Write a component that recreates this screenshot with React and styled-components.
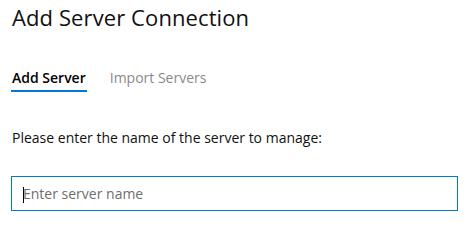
import React from "react";
import styled, { createGlobalStyle } from "styled-components";

const Global = createGlobalStyle`
  html, body { margin: 0; padding: 0; background: #fff; }
  body { font-family: "Segoe UI", "Open Sans", sans-serif; color: #000; }
`;

const Page = styled.div`
  display: flex;
  flex-direction: column;
  padding: 0 12px 0 11px;
`;

const Title = styled.h1`
  margin: 0;
  padding-left: 1px;
  font-size: 22px;
  font-weight: 400;
  line-height: 34px;
  letter-spacing: 0.1px;
  color: #111;
`;

const Tabs = styled.div`
  display: flex;
  gap: 22px;
  margin-top: 34px;
`;

const Tab = styled.div`
  font-size: 14px;
  line-height: 20px;
  padding: 0 1px 2px;
  font-weight: ${(p) => (p.$active ? 600 : 400)};
  color: ${(p) => (p.$active ? "#000" : "#8a8a8a")};
  border-bottom: 2px solid ${(p) => (p.$active ? "#0078d4" : "transparent")};
`;

const Label = styled.div`
  margin-top: 36px;
  padding-left: 1px;
  font-size: 14px;
  line-height: 20px;
  color: #111;
`;

const Field = styled.div`
  position: relative;
  margin-top: 28px;
  box-sizing: border-box;
  width: 447px;
  height: 35px;
  border: 1px solid #0078d4;
  display: flex;
  align-items: center;
`;

const Input = styled.input`
  flex: 1;
  height: 100%;
  box-sizing: border-box;
  border: none;
  outline: none;
  background: transparent;
  padding: 0 11px;
  font-family: inherit;
  font-size: 14px;
  color: #000;
  caret-color: transparent;
  &::placeholder { color: #6e6e6e; }
`;

const Caret = styled.span`
  position: absolute;
  left: 11px;
  top: 10px;
  width: 1px;
  height: 16px;
  background: #000;
`;

export default function App() {
  return (
    <>
      <Global />
      <Page>
        <Title>Add Server Connection</Title>
        <Tabs>
          <Tab $active>Add Server</Tab>
          <Tab>Import Servers</Tab>
        </Tabs>
        <Label>Please enter the name of the server to manage:</Label>
        <Field>
          <Input placeholder="Enter server name" />
          <Caret />
        </Field>
      </Page>
    </>
  );
}
